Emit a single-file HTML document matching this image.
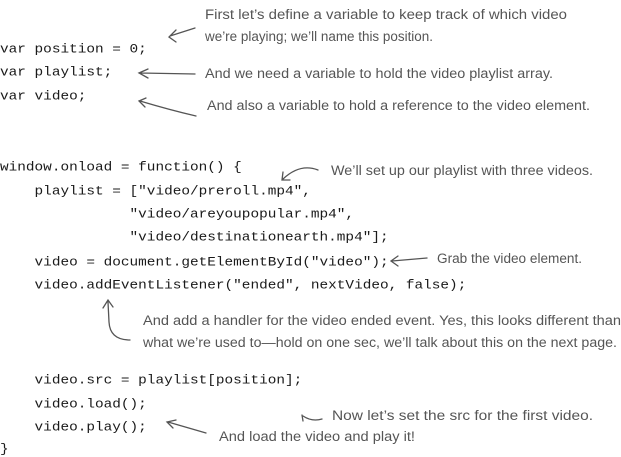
<!DOCTYPE html>
<html><head><meta charset="utf-8"><style>
html,body{margin:0;padding:0;background:#fff;}
body{width:621px;height:457px;position:relative;overflow:hidden;}
.c{position:absolute;font-family:"Liberation Mono",monospace;font-size:14.4px;color:#1a1a1a;white-space:pre;line-height:14px;transform:scaleY(0.88);transform-origin:0 50%;}
svg{position:absolute;left:0;top:0;}
svg text{font-family:"Liberation Sans Narrow","Liberation Sans",sans-serif;font-size:13.5px;fill:#555;}
</style></head><body>
<div class="c" style="left:0;top:43px">var position = 0;</div>
<div class="c" style="left:0;top:66px">var playlist;</div>
<div class="c" style="left:0;top:90px">var video;</div>
<div class="c" style="left:0;top:161px">window.onload = function() {</div>
<div class="c" style="left:0;top:185px">    playlist = ["video/preroll.mp4",</div>
<div class="c" style="left:0;top:208px">               "video/areyoupopular.mp4",</div>
<div class="c" style="left:0;top:231px">               "video/destinationearth.mp4"];</div>
<div class="c" style="left:0;top:256px">    video = document.getElementById("video");</div>
<div class="c" style="left:0;top:279px">    video.addEventListener("ended", nextVideo, false);</div>
<div class="c" style="left:0;top:374px">    video.src = playlist[position];</div>
<div class="c" style="left:0;top:398px">    video.load();</div>
<div class="c" style="left:0;top:421px">    video.play();</div>
<div class="c" style="left:0;top:443px">}</div>
<svg width="621" height="457" viewBox="0 0 621 457">
<g fill="none" stroke="#555" stroke-width="1.3" stroke-linecap="round">
<path d="M195 28 L170 36 M176 30 L169 37 L176 42"/>
<path d="M195 74 L140 73 M148 69 L139 73 L148 78"/>
<path d="M196 116 Q170 110 140 101 M146 98 L139 101 L145 107"/>
<path d="M318 170 Q300 163 283 179 M283 172 L282 180 L290 180"/>
<path d="M427 258 L392 261 M398 256 L391 261 L398 266"/>
<path d="M130 340 Q110 340 109 322 L108 302 M103 308 L108 300 L113 307"/>
<path d="M322 419 Q312 422 303 416 M303 421 L302 415"/>
<path d="M206 433 L168 422 M176 420 L167 422 L173 428"/>
</g>
<text x="205" y="19" textLength="362" lengthAdjust="spacingAndGlyphs">First let’s define a variable to keep track of which video</text>
<text x="205" y="41" textLength="228" lengthAdjust="spacingAndGlyphs">we’re playing; we’ll name this position.</text>
<text x="205" y="78" textLength="348" lengthAdjust="spacingAndGlyphs">And we need a variable to hold the video playlist array.</text>
<text x="207" y="110" textLength="383" lengthAdjust="spacingAndGlyphs">And also a variable to hold a reference to the video element.</text>
<text x="331" y="175" textLength="262" lengthAdjust="spacingAndGlyphs">We’ll set up our playlist with three videos.</text>
<text x="437" y="263" textLength="145" lengthAdjust="spacingAndGlyphs">Grab the video element.</text>
<text x="143" y="325" textLength="478" lengthAdjust="spacingAndGlyphs">And add a handler for the video ended event. Yes, this looks different than</text>
<text x="143" y="347" textLength="474" lengthAdjust="spacingAndGlyphs">what we’re used to—hold on one sec, we’ll talk about this on the next page.</text>
<text x="332" y="420" textLength="261" lengthAdjust="spacingAndGlyphs">Now let’s set the src for the first video.</text>
<text x="219" y="441" textLength="196" lengthAdjust="spacingAndGlyphs">And load the video and play it!</text>
</svg>
</body></html>
